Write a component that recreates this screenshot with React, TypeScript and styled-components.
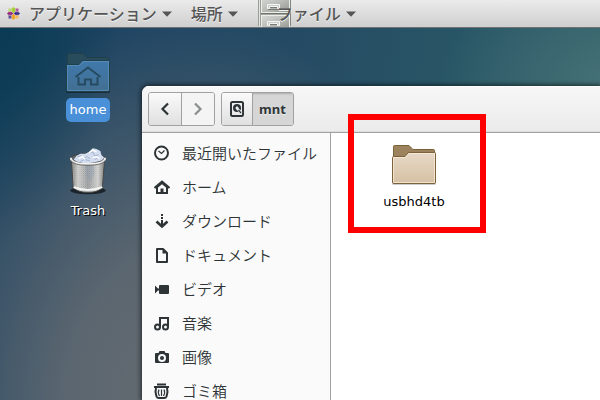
import React from "react";
import styled, { createGlobalStyle, css } from "styled-components";

const GlobalStyle = createGlobalStyle`
  * { box-sizing: border-box; }
  html, body { margin: 0; overflow: hidden; }
  body { font-family: "DejaVu Sans", "Noto Sans CJK JP", sans-serif; font-size: 13px; }
  button { font: inherit; color: inherit; margin: 0; padding: 0; border: 0; background: none; }
  svg { display: block; flex: none; }
`;

const Desktop = styled.div`
  position: relative;
  display: flex;
  flex-direction: column;
  height: 100vh;
  overflow: hidden;
  background:
    radial-gradient(ellipse 20% 55% at 0% 4%, rgba(4, 56, 80, 0.8), rgba(20, 60, 90, 0) 100%),
    radial-gradient(ellipse 48% 98% at 30% 102%, #656b71 0%, rgba(96, 105, 113, 0.92) 40%, rgba(70, 90, 108, 0) 100%),
    radial-gradient(ellipse 30% 30% at 103% 22%, rgba(74, 120, 122, 0.8), rgba(50, 96, 110, 0) 100%),
    linear-gradient(100deg, #1b4260 0%, #1f4563 20%, #264c64 50%, #295766 72%, #365f6b 100%);
`;

const TopBar = styled.header`
  display: flex;
  flex: none;
  align-items: center;
  gap: 19px;
  height: 28px;
  padding-left: 6px;
  border-bottom: 1px solid #6f7274;
  background: linear-gradient(#ebebeb, #cfcfcf);
`;

const MenuButton = styled.button`
  display: flex;
  align-items: center;
  gap: 5px;
  height: 27px;
  color: #555555;
  font-family: "Noto Sans CJK JP", sans-serif;
  font-size: 16px;
  font-weight: 500;
  line-height: 24px;
  text-shadow: 0 1px 0 #f4f4f4;
  white-space: nowrap;
`;

const MenuText = styled.span<{ $overlap?: boolean }>`
  height: 26px;
  ${(p) => p.$overlap && css`margin-left: -20px;`}
`;

const LogoSlot = styled.span`
  width: 18px;
`;

const Workspace = styled.div`
  display: flex;
  flex: 1;
  min-height: 0;
`;

const DesktopIcons = styled.div`
  display: flex;
  flex: none;
  flex-direction: column;
  align-items: center;
  gap: 25px;
  width: 142px;
  padding: 24px 0 0 34px;
`;

const DesktopItem = styled.button`
  display: flex;
  flex-direction: column;
  align-items: center;
  gap: 4px;
  color: #ffffff;
`;

const ItemLabel = styled.span<{ $tone: "selected" | "desktop" | "file" }>`
  padding: 4px;
  border-radius: 5px;
  line-height: 16px;
  ${(p) => p.$tone === "selected" && css`background: #4a90d9;`}
  ${(p) => p.$tone === "desktop" && css`text-shadow: 1px 1px 0 #000000;`}
`;

const FileWindow = styled.main`
  display: flex;
  flex: 1;
  flex-direction: column;
  min-width: 0;
  margin-top: 58px;
  overflow: hidden;
  border-top-left-radius: 7px;
  background: #ffffff;
  box-shadow: 0 0 5px 1px rgba(0, 0, 0, 0.65);
`;

const HeaderBar = styled.div`
  display: flex;
  flex: none;
  gap: 6px;
  height: 47px;
  padding: 6px;
  border-bottom: 1px solid #a1a1a1;
  background: linear-gradient(#f7f7f7, #ebebeb);
  box-shadow: inset 0 1px #ffffff, inset 0 -1px #dddddd;
`;

const ButtonGroup = styled.div`
  display: flex;
  height: 34px;
  overflow: hidden;
  border: 1px solid #a1a1a1;
  border-radius: 3px;
`;

const HeaderButton = styled.button<{ $state?: "disabled" | "active" | "root" }>`
  display: flex;
  align-items: center;
  justify-content: center;
  width: ${(p) => (p.$state === "root" ? "30px" : "32px")};
  color: #2e3436;
  font-family: "Noto Sans", sans-serif;
  font-size: 13px;
  font-weight: 700;
  background: linear-gradient(#fafafa, #e0e0e0);
  & + & { width: 33px; border-left: 1px solid #a1a1a1; }
  ${(p) => p.$state === "disabled" && css`color: #8b8e8f; background: #f4f4f4;`}
  ${(p) =>
    p.$state === "active" &&
    css`
      && { width: auto; padding: 0 7px 0 6px; }
      background: #d6d6d6;
      box-shadow: inset 0 2px 2px -1px rgba(0, 0, 0, 0.2);
      text-shadow: 0 1px #eeeeee;
    `}
`;

const WindowBody = styled.div`
  display: flex;
  flex: 1;
  min-height: 0;
`;

const Sidebar = styled.nav`
  flex: none;
  width: 189px;
  padding-top: 3px;
  overflow: hidden;
  border-right: 1px solid #a1a1a1;
  background: #fafafa;
`;

const PlaceLink = styled.a`
  display: flex;
  align-items: center;
  gap: 12px;
  height: 34px;
  padding-left: 12px;
  color: #2e3436;
  font-family: "Noto Sans CJK JP", sans-serif;
  font-size: 15px;
  font-weight: 350;
  line-height: 34px;
  text-decoration: none;
  white-space: nowrap;
`;

const FileArea = styled.section`
  flex: 1;
  padding: 11px 48px;
`;

const FileItem = styled.button`
  display: flex;
  flex-direction: column;
  align-items: center;
  gap: 4px;
  min-width: 70px;
  color: #000000;
`;

const Highlight = styled.div`
  position: absolute;
  top: 114px;
  left: 348px;
  width: 138px;
  height: 119px;
  border: 6px solid #ff0000;
  pointer-events: none;
`;

const Caret = () => (
  <svg width="10" height="6" viewBox="0 0 10 6" aria-hidden="true">
    <path d="M0 0.5H10L5 5.8Z" fill="#555" />
  </svg>
);

const DistroLogo = () => (
  <svg width="15" height="15" viewBox="0 0 15 15" aria-hidden="true">
    <rect x="2.5" y="2.5" width="4.6" height="4.6" fill="#b9da6a" />
    <rect x="7.9" y="2.5" width="4.6" height="4.6" fill="#b95aa2" />
    <rect x="2.5" y="7.9" width="4.6" height="4.6" fill="#5b5099" />
    <rect x="7.9" y="7.9" width="4.6" height="4.6" fill="#f5b95c" />
    <path d="M7.5 .8 9.3 2.6V5.8L7.5 7.5 5.7 5.8V2.6Z" fill="#9fd02a" stroke="#e8e8e8" strokeWidth=".5" />
    <path d="M14.2 7.5 12.4 9.3H9.2L7.5 7.5 9.2 5.7H12.4Z" fill="#3b3088" stroke="#e8e8e8" strokeWidth=".5" />
    <path d="M7.5 14.2 5.7 12.4V9.2L7.5 7.5 9.3 9.2V12.4Z" fill="#f0a020" stroke="#e8e8e8" strokeWidth=".5" />
    <path d="M.8 7.5 2.6 5.7H5.8L7.5 7.5 5.8 9.3H2.6Z" fill="#982a7e" stroke="#e8e8e8" strokeWidth=".5" />
  </svg>
);

const CabinetIcon = () => (
  <svg width="35" height="27" viewBox="-1 0 35 27" aria-hidden="true">
    <defs>
      <linearGradient id="cab" x1="0" x2="1" y1="0" y2="1">
        <stop offset="0" stopColor="#d8dad6" />
        <stop offset=".55" stopColor="#b5b8b3" />
        <stop offset="1" stopColor="#92958f" />
      </linearGradient>
    </defs>
    <rect width="33" height="26" fill="#a4a7a2" />
    <path d="M.5 0V26M2.5 0V26" stroke="#9a9d98" />
    <path d="M1.5 0V26" stroke="#e5e6e3" />
    <rect x="3.500" y="-3" width="28" height="15.500" fill="url(#cab)" stroke="#eceeea" />
    <path d="M3 13.5H32" stroke="#6f726d" />
    <rect x="3.500" y="15.500" width="28" height="14" fill="url(#cab)" stroke="#eceeea" />
    <path d="M32.500 0V26" stroke="#83867f" />
    <g fill="#c9cbc7" stroke="#f5f5f3">
      <path d="M9.500 4.500H21.500V8.500H19.500V6.500H11.500V8.500H9.500Z" />
      <path d="M9.500 21.500H21.500V25.500H19.500V23.500H11.500V25.500H9.500Z" />
    </g>
    <path d="M10 9.500H21M12 7.500H19M12 24.500H19" stroke="#777a75" />
  </svg>
);

const FolderIcon = ({ home }: { home?: boolean }) => {
  const id = home ? "home" : "plain";
  const edge = home ? "#203f49" : "#7d6139";
  return (
    <svg width="46" height="42" viewBox="0 0 46 42" aria-hidden="true">
      <defs>
        <linearGradient id={id} x1="0" x2="0" y1="0" y2="1">
          <stop offset="0" stopColor={home ? "#4079ad" : "#e8d9c7"} />
          <stop offset="1" stopColor={home ? "#426f91" : "#d5c0a2"} />
        </linearGradient>
      </defs>
      <rect x="1" y="38" width="44" height="3" rx="1.5" fill="#000" opacity={home ? 0.4 : 0.2} />
      <path
        d="M2.500 13V2.500Q2.500 1.500 3.500 1.500H18L22 5.500H42.500Q43.500 5.500 43.500 6.500V14H2.500Z"
        fill={home ? "#284c5b" : "#9c835e"}
        stroke={edge}
      />
      <path
        d="M1.500 13.500Q1.500 12.500 2.500 12.500H14L17.500 8.500H43.500Q44.500 8.500 44.500 9.500V38Q44.500 39.500 43 39.500H3Q1.500 39.500 1.500 38Z"
        fill={`url(#${id})`}
        stroke={edge}
      />
      <path
        d="M2.500 37.500V13.500H14.500L18 9.500H43.500V38.500H2.500Z"
        fill="none"
        stroke={home ? "#5790bd" : "#f5ebdd"}
        opacity=".8"
      />
      {home && (
        <path
          d="M10.500 25 23 15.500 35.500 25M13.500 25V32.500H20V27.500H26V32.500H32.500V25"
          fill="none"
          stroke="#264b61"
          strokeWidth="2"
        />
      )}
    </svg>
  );
};

const TrashIcon = () => (
  <svg width="40" height="48" viewBox="0 -1 42 50" aria-hidden="true">
    <defs>
      <linearGradient id="bin" x1="0" x2="1">
        <stop offset="0" stopColor="#8a8a88" />
        <stop offset=".2" stopColor="#e9e9e7" />
        <stop offset=".5" stopColor="#b0b2b5" />
        <stop offset=".8" stopColor="#ededeb" />
        <stop offset="1" stopColor="#858583" />
      </linearGradient>
      <pattern id="mesh" width="2" height="2" patternUnits="userSpaceOnUse">
        <rect width="1" height="1" fill="#555" opacity=".45" />
        <rect x="1" y="1" width="1" height="1" fill="#555" opacity=".3" />
      </pattern>
    </defs>
    <ellipse cx="21" cy="44.500" rx="18.500" ry="4" fill="#000" opacity=".6" />
    <path d="M3.500 11 5.500 42Q12 46.500 21 46.500T36 42L38.500 11Z" fill="url(#bin)" stroke="#444" />
    <path d="M5 15 6.500 40Q21 46 35.500 40L37 15Z" fill="url(#mesh)" />
    <path d="M18 19 27 17 28 26 24 35 19 30Z" fill="#8d9cae" opacity=".35" />
    <path d="M6 41Q21 47 36 41" fill="none" stroke="#f5f5f3" strokeWidth="2" />
    <ellipse cx="21" cy="11" rx="18.500" ry="5.500" fill="#5e6268" stroke="#3f4144" />
    <path d="M6 12 9 8 13 6 18 6 22 4 26 0 30 1 34 3 35 7 38 10 35 13 27 15 18 16 9 14Z" fill="#d3ddef" />
    <path d="M10 9 14 8 16 11 20 9 23 11M23 5 26 4 28 8 32 7M13 14 17 12 23 13M28 12 32 10" fill="none" stroke="#9fb0cb" />
    <path d="M11 11 15 9 18 12M22 5 26 2 30 4M26 10 30 9 33 11" fill="none" stroke="#fff" strokeWidth="1.500" />
    <path d="M3 10Q3 16.500 21 16.500T39 10" fill="none" stroke="#f2f2f0" strokeWidth="2" />
    <path d="M3 13Q6 18 21 18T39 13" fill="none" stroke="#555" strokeWidth=".8" />
  </svg>
);

const Chevron = ({ next }: { next?: boolean }) => (
  <svg width="16" height="16" viewBox="0 0 16 16" aria-hidden="true">
    <path d={next ? "M5 2.500 10.500 8 5 13.500" : "M11 2.500 5.500 8 11 13.500"} fill="none" stroke="currentColor" strokeWidth="2.200" />
  </svg>
);

const DiskIcon = () => (
  <svg width="16" height="16" viewBox="0 0 16 16" aria-hidden="true">
    <rect x="2" y="1" width="12" height="14" rx="1.500" fill="none" stroke="#2e3436" strokeWidth="2" />
    <circle cx="8" cy="7" r="4" fill="#2e3436" />
    <path d="M7.500 6.500 12.500 12.500" stroke="#eee" strokeWidth="2.400" />
    <circle cx="8" cy="7" r="1.400" fill="#eee" />
    <path d="M9.500 9 12 12" stroke="#2e3436" strokeWidth="1.200" />
  </svg>
);

const placeIcons: Record<string, React.ReactNode> = {
  recent: (
    <g fill="none" stroke="#2e3436">
      <circle cx="7.500" cy="8" r="6.500" strokeWidth="2" />
      <path d="M4.500 6 7.500 8.500 10.500 5.500" strokeWidth="1.200" />
    </g>
  ),
  home: (
    <>
      <path d="M.5 9 8 2.500 15.500 9" fill="none" stroke="#2e3436" strokeWidth="2" />
      <path d="M2 8 8 3 14 8V15H2ZM4 8.500V13H6.500V9.500H9.500V13H12V8.500L8 5.200Z" fill="#2e3436" fillRule="evenodd" />
    </>
  ),
  download: (
    <>
      <path d="M7 1H9V3H7ZM7 4H9V6H7ZM7 7H9V12H7Z" fill="#2e3436" />
      <path d="M2.500 8.500 8 13.500 13.500 8.500" fill="none" stroke="#2e3436" strokeWidth="2.600" />
    </>
  ),
  document: (
    <>
      <path d="M3 2H9L13 6V15H3Z" fill="none" stroke="#2e3436" strokeWidth="2" strokeLinejoin="round" />
      <path d="M8.500 2V6.500H13Z" fill="#2e3436" />
    </>
  ),
  video: (
    <path d="M6 4H14Q15 4 15 5V12Q15 13 14 13H6Q5 13 5 12V9.500H4L1 12.500V4.500L4 7.500H5V5Q5 4 6 4Z" fill="#2e3436" />
  ),
  music: (
    <g fill="none" stroke="#2e3436" strokeWidth="2">
      <circle cx="3.500" cy="12" r="2.500" />
      <circle cx="11.500" cy="12" r="2.500" />
      <path d="M6 12V3H14V12" />
    </g>
  ),
  picture: (
    <>
      <path
        d="M2 4H4.500L5.500 2H10.500L11.500 4H14Q15 4 15 5V13Q15 14 14 14H2Q1 14 1 13V5Q1 4 2 4ZM8 5A4 4 0 1 0 8 13A4 4 0 1 0 8 5Z"
        fill="#2e3436"
        fillRule="evenodd"
      />
      <circle cx="8" cy="9" r="2" fill="#2e3436" />
    </>
  ),
  trash: (
    <g fill="none" stroke="#2e3436">
      <path d="M0 4H15M3 1.500H12" strokeWidth="2" />
      <path d="M2 5 1.500 9 2.500 13.500Q3 15 5 15H10Q12 15 12.500 13.500L13.500 9 13 5" strokeWidth="2" />
      <path d="M5 6.500Q3.500 9.500 5.500 13M10 6.500Q11.500 9.500 9.500 13M7.500 6.500V13" strokeWidth="1.200" />
    </g>
  ),
};

const places = [
  { icon: "recent", label: "最近開いたファイル" },
  { icon: "home", label: "ホーム" },
  { icon: "download", label: "ダウンロード" },
  { icon: "document", label: "ドキュメント" },
  { icon: "video", label: "ビデオ" },
  { icon: "music", label: "音楽" },
  { icon: "picture", label: "画像" },
  { icon: "trash", label: "ゴミ箱" },
];

export default function App() {
  return (
    <>
      <GlobalStyle />
      <Desktop>
        <TopBar>
          <MenuButton>
            <LogoSlot><DistroLogo /></LogoSlot>
            <MenuText>アプリケーション</MenuText>
            <Caret />
          </MenuButton>
          <MenuButton>
            <MenuText>場所</MenuText>
            <Caret />
          </MenuButton>
          <MenuButton>
            <CabinetIcon />
            <MenuText $overlap>ファイル</MenuText>
            <Caret />
          </MenuButton>
        </TopBar>
        <Workspace>
          <DesktopIcons>
            <DesktopItem>
              <FolderIcon home />
              <ItemLabel $tone="selected">home</ItemLabel>
            </DesktopItem>
            <DesktopItem>
              <TrashIcon />
              <ItemLabel $tone="desktop">Trash</ItemLabel>
            </DesktopItem>
          </DesktopIcons>
          <FileWindow>
            <HeaderBar>
              <ButtonGroup>
                <HeaderButton aria-label="戻る"><Chevron /></HeaderButton>
                <HeaderButton aria-label="進む" $state="disabled" disabled><Chevron next /></HeaderButton>
              </ButtonGroup>
              <ButtonGroup>
                <HeaderButton aria-label="コンピューター" $state="root"><DiskIcon /></HeaderButton>
                <HeaderButton $state="active">mnt</HeaderButton>
              </ButtonGroup>
            </HeaderBar>
            <WindowBody>
              <Sidebar>
                {places.map((place) => (
                  <PlaceLink key={place.icon} href={`#${place.icon}`}>
                    <svg width="16" height="16" viewBox="0 0 16 16" aria-hidden="true">{placeIcons[place.icon]}</svg>
                    {place.label}
                  </PlaceLink>
                ))}
              </Sidebar>
              <FileArea>
                <FileItem>
                  <FolderIcon />
                  <ItemLabel $tone="file">usbhd4tb</ItemLabel>
                </FileItem>
              </FileArea>
            </WindowBody>
          </FileWindow>
        </Workspace>
        <Highlight />
      </Desktop>
    </>
  );
}
